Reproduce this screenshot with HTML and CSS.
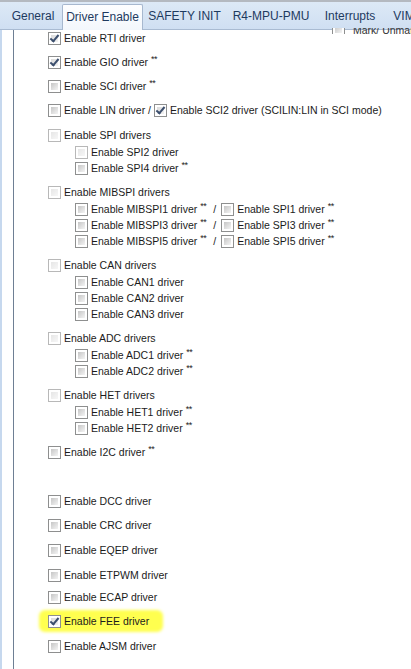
FILE: index.html
```html
<!DOCTYPE html>
<html>
<head>
<meta charset="utf-8">
<link rel="stylesheet" href="styles.css">
</head>
<body>
<div class="window">
  <div class="tabs">
    <div class="tab t-general">General</div>
    <div class="tab active t-driver">Driver Enable</div>
    <div class="tab t-safety">SAFETY INIT</div>
    <div class="tab t-mpu">R4-MPU-PMU</div>
    <div class="tab t-int">Interrupts</div>
    <div class="tab t-vim">VIM</div>
  </div>
  <div class="body">
    <div class="gutter"></div>
    <div class="content">
      <div class="mark-clip"><div class="mark"><span class="cb"></span><span>Mark/ Unmark all</span></div></div>

      <div class="item"><label class="row"><span class="cb checked"></span>Enable RTI driver</label></div>
      <div class="item"><label class="row"><span class="cb checked"></span>Enable GIO driver <span class="st">**</span></label></div>
      <div class="item"><label class="row"><span class="cb"></span>Enable SCI driver <span class="st">**</span></label></div>
      <div class="item"><label class="row"><span class="cb"></span>Enable LIN driver /&nbsp;<span class="cb checked inl"></span>Enable SCI2 driver (SCILIN:LIN in SCI mode)</label></div>

      <div class="item group mt1">
        <label class="row"><span class="cb light"></span>Enable SPI drivers</label>
        <div class="subs">
          <label class="row"><span class="cb light"></span>Enable SPI2 driver</label>
          <label class="row"><span class="cb"></span>Enable SPI4 driver <span class="st">**</span></label>
        </div>
      </div>

      <div class="item group">
        <label class="row"><span class="cb light"></span>Enable MIBSPI drivers</label>
        <div class="subs">
          <label class="row"><span class="cb"></span>Enable MIBSPI1 driver <span class="st">**</span><span class="slash">/</span><span class="cb inl"></span>Enable SPI1 driver <span class="st">**</span></label>
          <label class="row"><span class="cb"></span>Enable MIBSPI3 driver <span class="st">**</span><span class="slash">/</span><span class="cb inl"></span>Enable SPI3 driver <span class="st">**</span></label>
          <label class="row"><span class="cb"></span>Enable MIBSPI5 driver <span class="st">**</span><span class="slash">/</span><span class="cb inl"></span>Enable SPI5 driver <span class="st">**</span></label>
        </div>
      </div>

      <div class="item group">
        <label class="row"><span class="cb light"></span>Enable CAN drivers</label>
        <div class="subs">
          <label class="row"><span class="cb"></span>Enable CAN1 driver</label>
          <label class="row"><span class="cb"></span>Enable CAN2 driver</label>
          <label class="row"><span class="cb"></span>Enable CAN3 driver</label>
        </div>
      </div>

      <div class="item group">
        <label class="row"><span class="cb light"></span>Enable ADC drivers</label>
        <div class="subs">
          <label class="row"><span class="cb"></span>Enable ADC1 driver <span class="st">**</span></label>
          <label class="row"><span class="cb"></span>Enable ADC2 driver <span class="st">**</span></label>
        </div>
      </div>

      <div class="item group">
        <label class="row"><span class="cb light"></span>Enable HET drivers</label>
        <div class="subs">
          <label class="row"><span class="cb"></span>Enable HET1 driver <span class="st">**</span></label>
          <label class="row"><span class="cb"></span>Enable HET2 driver <span class="st">**</span></label>
        </div>
      </div>

      <div class="item"><label class="row"><span class="cb"></span>Enable I2C driver <span class="st">**</span></label></div>
      <div class="item spacer"></div>
      <div class="item"><label class="row"><span class="cb"></span>Enable DCC driver</label></div>
      <div class="item"><label class="row"><span class="cb"></span>Enable CRC driver</label></div>
      <div class="item mt1"><label class="row"><span class="cb"></span>Enable EQEP driver</label></div>
      <div class="item mt1"><label class="row"><span class="cb"></span>Enable ETPWM driver</label></div>
      <div class="item mtm2"><label class="row"><span class="cb"></span>Enable ECAP driver</label></div>
      <div class="item"><label class="row hl"><span class="cb checked"></span>Enable FEE driver</label></div>
      <div class="item mt1"><label class="row"><span class="cb"></span>Enable AJSM driver</label></div>
    </div>
  </div>
</div>
</body>
</html>
```

FILE: styles.css
```css
html, body {
  margin: 0;
  padding: 0;
  background: #ffffff;
}
body {
  font-family: "Liberation Sans", Arial, sans-serif;
  font-size: 10.5px;
  color: #1b1b1b;
  overflow: hidden;
}
.window {
  width: 411px;
  height: 669px;
  display: flex;
  flex-direction: column;
  overflow: hidden;
}
.tabs {
  height: 27px;
  flex: none;
  display: flex;
  align-items: flex-end;
  border-top: 2px solid #b4b9c0;
  background: linear-gradient(#dde9f6, #cfdff2);
  border-bottom: 1px solid #a9bbd2;
  padding-left: 4px;
  white-space: nowrap;
}
.tab {
  flex: none;
  height: 24px;
  line-height: 22px;
  font-size: 12px;
  color: #1e3a5f;
  text-align: center;
  box-sizing: border-box;
}
.t-general { width: 58px; }
.t-driver { width: 81px; }
.t-safety { width: 83px; }
.t-mpu { width: 90px; }
.t-int { width: 68px; }
.t-vim { width: 40px; }
.tab.active {
  background: linear-gradient(#fdfeff, #f3f7fc);
  border: 1px solid #a7b8cf;
  border-bottom: none;
  border-radius: 2px 2px 0 0;
  height: 26px;
  margin-bottom: -1px;
  line-height: 24px;
}
.body {
  flex: 1;
  display: flex;
}
.gutter {
  width: 11px;
  flex: none;
  border-left: 2px solid #c6d8ee;
  border-right: 1px solid #6e7f94;
  background: #ffffff;
}
.content {
  flex: 1;
  position: relative;
  padding: 0 0 0 34px;
  display: flex;
  flex-direction: column;
  gap: 8px;
}
.mark-clip {
  position: absolute;
  top: -2px;
  left: 318px;
  height: 6px;
  width: 90px;
  overflow: hidden;
}
.mark {
  display: flex;
  align-items: center;
  gap: 5px;
  margin-top: -5px;
  color: #333;
  white-space: nowrap;
}
.item {
  display: flex;
  flex-direction: column;
}
.mt1 { margin-top: 1px; }
.mtm2 { margin-top: -2px; }
.spacer {
  height: 17px;
}
.row {
  display: flex;
  align-items: center;
  height: 16px;
  white-space: nowrap;
}
.subs {
  display: flex;
  flex-direction: column;
  padding-left: 27px;
  padding-top: 1px;
}
.st {
  font-size: 9px;
  margin-left: 3px;
  position: relative;
  top: -3px;
  letter-spacing: -0.5px;
}
.slash {
  margin: 0 5px 0 7px;
}
.cb {
  flex: none;
  width: 13px;
  height: 13px;
  box-sizing: border-box;
  border: 1px solid #8e8f8f;
  background: #fff;
  margin-right: 3px;
  position: relative;
}
.cb::before {
  content: "";
  position: absolute;
  inset: 2px;
  background: linear-gradient(135deg, #c6c6c6, #ebebeb 80%, #f4f4f4);
}
.cb.light {
  border-color: #b8b8b8;
}
.cb.light::before {
  background: linear-gradient(135deg, #e6e6e6, #f7f7f7);
}
.cb.inl {
  margin-left: 0;
}
.cb.checked::before {
  background: linear-gradient(135deg, #dadada, #f2f2f2);
}
.cb.checked::after {
  content: "";
  position: absolute;
  left: 3px;
  top: 0px;
  width: 3px;
  height: 7px;
  border-right: 2px solid #3c4f6e;
  border-bottom: 2px solid #3c4f6e;
  transform: rotate(40deg);
}
.hl {
  position: relative;
  align-self: flex-start;
}
.hl::before {
  content: "";
  position: absolute;
  left: -9px;
  right: -14px;
  top: -3px;
  bottom: -3px;
  background: #ffff4f;
  border-radius: 6px;
  filter: blur(1.5px);
  z-index: -1;
}
.item:has(.hl) {
  position: relative;
  z-index: 0;
}
```
